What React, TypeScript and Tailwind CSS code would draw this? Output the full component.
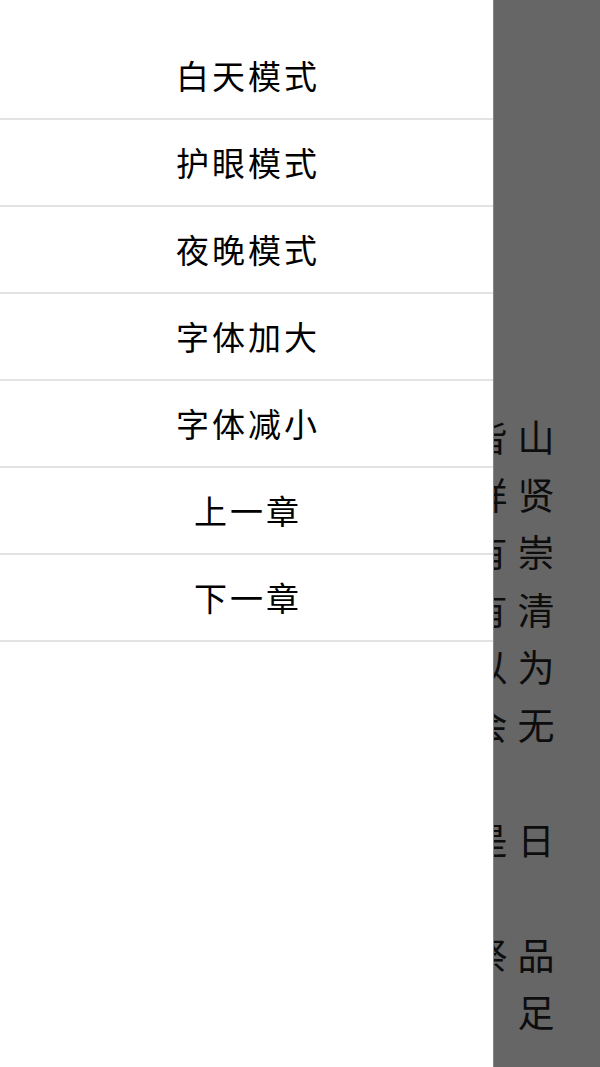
const menuItems = [
  "白天模式",
  "护眼模式",
  "夜晚模式",
  "字体加大",
  "字体减小",
  "上一章",
  "下一章",
];

// reading page behind the drawer, right-to-left vertical columns
const columns = [
  ["山", "贤", "崇", "清", "为", "无", "", "日", "", "品", "足"],
  ["皆", "祥", "有", "有", "以", "会", "", "是", "", "祭", ""],
];

const cjk = "font-['Noto_Sans_CJK_SC','Noto_Sans_CJK_TC',sans-serif]";

export default function App() {
  return (
    <div
      className={`${cjk} relative h-[1067px] w-[600px] overflow-hidden bg-[#666666]`}
    >
      <div className="flex h-full flex-row-reverse gap-[9px] pr-[45px] pt-[408px]">
        {columns.map((col, i) => (
          <div key={i} className="flex w-[38px] flex-col">
            {col.map((ch, j) => (
              <span
                key={j}
                className="flex h-[57.5px] items-center justify-center text-[37px] leading-none text-[#0d0d0d]"
              >
                {ch}
              </span>
            ))}
          </div>
        ))}
      </div>

      <nav className="absolute inset-y-0 left-0 w-[493px] bg-white pt-[33px] shadow-[1px_0_0_#858585]">
        {menuItems.map((label) => (
          <div
            key={label}
            className="flex h-[87px] items-center justify-center border-b-2 border-[#e3e3e3]"
          >
            <span className="pl-[3px] text-[33px] leading-none tracking-[3px] text-black">
              {label}
            </span>
          </div>
        ))}
      </nav>
    </div>
  );
}
